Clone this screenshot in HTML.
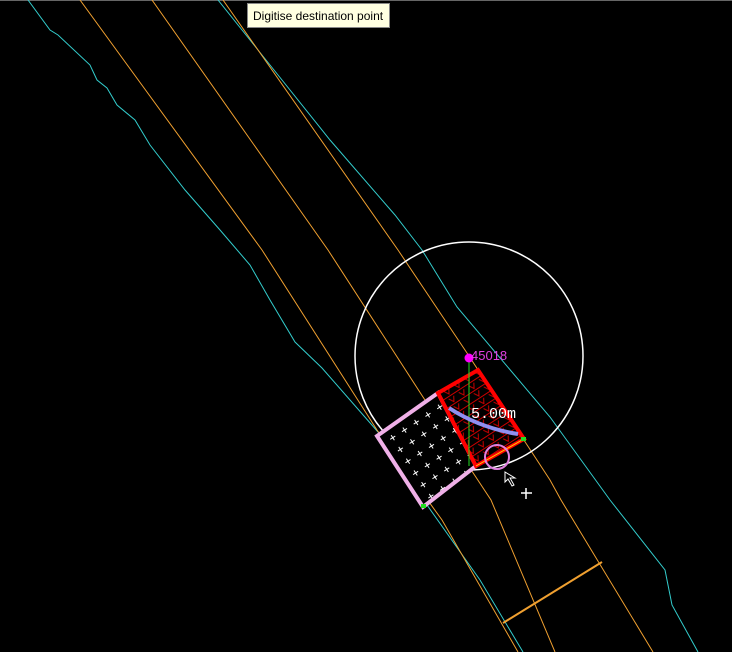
<!DOCTYPE html>
<html><head><style>
html,body{margin:0;padding:0;background:#000;width:732px;height:652px;overflow:hidden}
.tip{position:absolute;left:247px;top:3px;width:143px;height:25px;background:#ffffe1;border:1px solid #888;font:12px "Liberation Sans",sans-serif;color:#000;line-height:25px;padding-left:5px;box-sizing:border-box}
</style></head><body>
<svg width="732" height="652" style="position:absolute;left:0;top:0">
<defs>
<pattern id="pl" width="14" height="14" patternUnits="userSpaceOnUse" patternTransform="rotate(-33)">
<path d="M4 7h6M7 4v6" stroke="#fff" stroke-width="1"/></pattern>
<pattern id="rv" width="12" height="9" patternUnits="userSpaceOnUse" patternTransform="rotate(-33)">
<path d="M0 1h12M3 3l3 5 3-5" stroke="#c00" stroke-width="1" fill="none"/></pattern>
</defs>
<line x1="0" y1="0.5" x2="732" y2="0.5" stroke="#666"/>
<polyline fill="none" stroke="#3cc" stroke-width="1" points="28,0 50,30 58,35 90,65 97,80 107,88 117,105 135,120 150,145 185,190 220,230 250,265 270,300 295,342 322,368 378,432 405,460 427,505 480,580 523,652"/>
<polyline fill="none" stroke="#3cc" stroke-width="1" points="218,0 270,65 330,140 395,215 422,250 457,307 550,417 610,500 665,570 672,605 698,652"/>
<polyline fill="none" stroke="#f0a030" points="80,0 262,250 377,430 442,520 518,652"/>
<polyline fill="none" stroke="#f0a030" points="152,0 328,250 423,397 491,500 555,652"/>
<polyline fill="none" stroke="#f0a030" points="223,0 398,250 467,353 550,480 561,500 653,652"/>
<line x1="503" y1="623" x2="602" y2="562" stroke="#f0a030" stroke-width="2"/>
<circle cx="469" cy="356" r="114" fill="none" stroke="#fff" stroke-width="1.5"/>
<polygon points="377,436 438,393 476,466 423,507" fill="#000"/>
<polygon points="377,436 438,393 476,466 423,507" fill="url(#pl)"/>
<polygon points="377,436 438,393 476,466 423,507" fill="none" stroke="#f0b0e8" stroke-width="4"/>
<polygon points="438,393 478,370 524,439 476,466" fill="#000"/>
<polygon points="438,393 478,370 524,439 476,466" fill="url(#rv)"/>
<polygon points="438,393 478,370 524,439 476,466" fill="none" stroke="#f00" stroke-width="4"/>
<line x1="476" y1="466" x2="524" y2="439" stroke="#fc0" stroke-width="1"/>
<line x1="469" y1="358" x2="469" y2="466" stroke="#2d2"/>
<path d="M449 408 Q480 428 518 434" stroke="#9090f0" stroke-width="4" fill="none"/>
<text x="471" y="418" fill="#fff" font-family="Liberation Mono,monospace" font-size="15">5.00m</text>
<circle cx="469" cy="358" r="4.5" fill="#f0f"/>
<text x="471" y="360" fill="#e040e0" font-family="Liberation Sans,sans-serif" font-size="13">45018</text>
<circle cx="497" cy="457" r="12" fill="none" stroke="#e080e0" stroke-width="2"/>
<rect x="421" y="504" width="5" height="4" fill="#2d2"/><rect x="521" y="437" width="5" height="4" fill="#2d2"/>
<path d="M505 472 L505 482 L508 479 L512 486 L514 485 L510 478 L515 478 Z" fill="#000" stroke="#fff"/>
<path d="M521 493h11M526 488v11" stroke="#fff" stroke-width="1.5"/>
</svg>
<div class="tip">Digitise destination point</div>
</body></html>
